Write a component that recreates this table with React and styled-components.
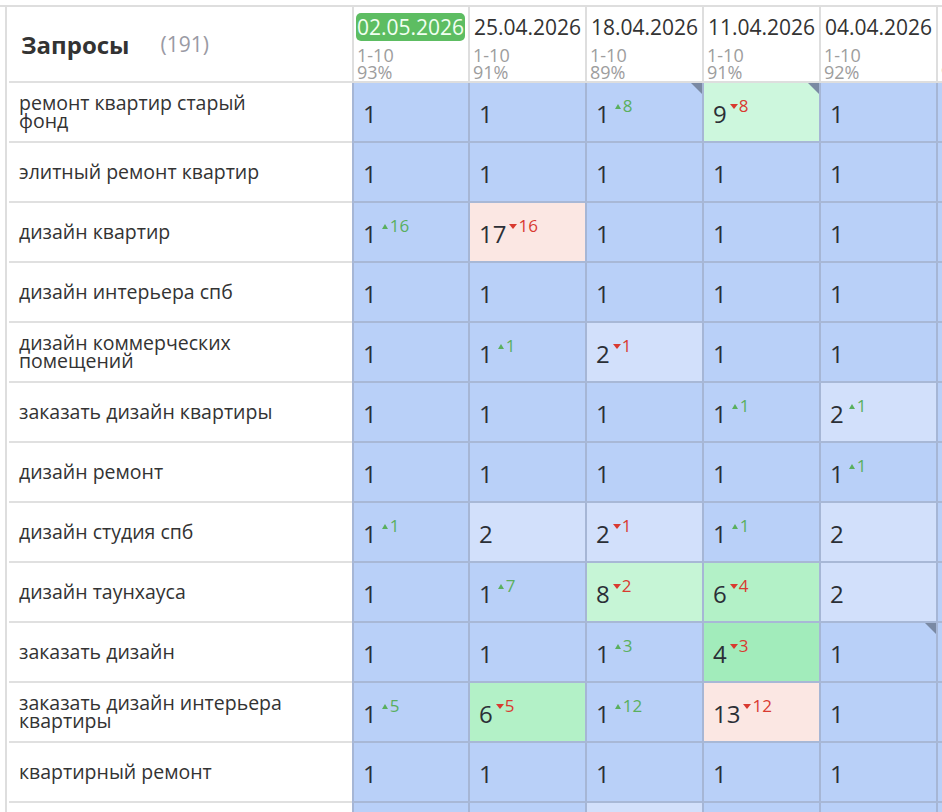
import React from "react";
import styled, { createGlobalStyle } from "styled-components";

const Global = createGlobalStyle`
  html, body { margin: 0; padding: 0; background: #fff; overflow: hidden; }
  body { font-family: "Open Sans", "Noto Sans", sans-serif; color: #333; }
`;

const COLORS = {
  blue: "#b9d0f8",
  light: "#d2e0fb",
  mint: "#cdf7dd",
  mint2: "#c6f5d6",
  green: "#b3f1c7",
  green2: "#a2ecbb",
  pink: "#fbe7e3",
};

const Frame = styled.div`
  padding-top: 5px;
  width: 942px;
  height: 812px;
  box-sizing: border-box;
  overflow: hidden;
`;

const Scroller = styled.div`
  border-top: 2px solid #dedede;
`;

const Table = styled.div`
  margin-left: 5px;
  border-left: 2px solid #dedede;
  display: flex;
  flex-direction: column;
  width: max-content;
`;

const Row = styled.div`
  display: flex;
  height: ${(p) => (p.$head ? 76 : 60)}px;
`;

const LeftCell = styled.div`
  margin-left: 2px;
  width: 343px;
  flex-shrink: 0;
  box-sizing: border-box;
  border-bottom: 2px solid #e0e0e0;
  display: flex;
  align-items: center;
  padding-left: ${(p) => (p.$head ? 12 : 10)}px;
  background: #fff;
`;

const Title = styled.span`
  font-size: 24px;
  font-weight: 700;
  color: #333;
`;

const Count = styled.span`
  margin-left: 31px;
  font-size: 21px;
  color: #9a9aa4;
`;

const Query = styled.span`
  display: block;
  max-width: 272px;
  font-size: 19.5px;
  line-height: 18px;
  color: #333;
`;

const HeadCell = styled.div`
  width: ${(p) => p.$w}px;
  flex-shrink: 0;
  box-sizing: border-box;
  border-left: 2px solid #dedede;
  border-bottom: 2px solid #dedede;
  padding: 6px 0 0 3px;
  display: flex;
  flex-direction: column;
  white-space: nowrap;
  overflow: hidden;
  background: #fff;
`;

const DateLabel = styled.span`
  align-self: flex-start;
  font-size: 21px;
  line-height: 28px;
  height: 28px;
  color: ${(p) => (p.$active ? "#f1fff1" : "#333")};
  background: ${(p) => (p.$active ? "#5dbd62" : "transparent")};
  border-radius: 5px;
  padding: 0 1px;
  margin-left: ${(p) => (p.$active ? -1 : 0)}px;
  margin-bottom: 6px;
`;

const Stat = styled.span`
  font-size: 18px;
  line-height: 17px;
  height: 17px;
  color: #9d9d9d;
`;

const DataCell = styled.div`
  position: relative;
  width: ${(p) => p.$w}px;
  flex-shrink: 0;
  box-sizing: border-box;
  border-left: 2px solid #a6b6d5;
  border-bottom: 2px solid #a8b8d6;
  background: ${(p) => COLORS[p.$tone]};
  display: flex;
  align-items: center;
  padding-left: 9px;
`;

const Corner = styled.span`
  position: absolute;
  top: 0;
  right: 0;
  width: 0;
  height: 0;
  border-top: 11px solid #7a89a3;
  border-left: 11px solid transparent;
`;

const Value = styled.span`
  display: inline-flex;
  align-items: flex-start;
  margin-top: 4px;
`;

const Num = styled.span`
  font-size: 24px;
  line-height: 24px;
  color: #2b2f36;
`;

const Delta = styled.span`
  display: inline-flex;
  align-items: center;
  margin-left: ${(p) => (p.$up ? 5 : 3)}px;
  margin-top: -5px;
  font-size: 17px;
  line-height: 17px;
  color: ${(p) => (p.$up ? "#5aaf5e" : "#d93a30")};
`;

const Arrow = styled.span`
  width: 0;
  height: 0;
  margin-right: ${(p) => (p.$up ? 2 : 1)}px;
  margin-top: 1px;
  border-left: ${(p) => (p.$up ? 3 : 4.5)}px solid transparent;
  border-right: ${(p) => (p.$up ? 3 : 4.5)}px solid transparent;
  ${(p) =>
    p.$up
      ? "border-bottom: 5px solid #5aaf5e;"
      : "border-top: 5px solid #d93a30;"}
`;

const widths = [116, 117, 117, 117, 117, 117];

const dates = [
  ["02.05.2026", "93%"],
  ["25.04.2026", "91%"],
  ["18.04.2026", "89%"],
  ["11.04.2026", "91%"],
  ["04.04.2026", "92%"],
  ["28.03.2026", "90%"],
];

const c = (v, tone = "blue", d = null, corner = false) => ({ v, tone, d, corner });

const rows = [
  ["ремонт квартир старый фонд", [c(1), c(1), c(1, "blue", 8, true), c(9, "mint", -8, true), c(1), c(1)]],
  ["элитный ремонт квартир", [c(1), c(1), c(1), c(1), c(1), c(1)]],
  ["дизайн квартир", [c(1, "blue", 16), c(17, "pink", -16), c(1), c(1), c(1), c(1)]],
  ["дизайн интерьера спб", [c(1), c(1), c(1), c(1), c(1), c(1)]],
  ["дизайн коммерческих помещений", [c(1), c(1, "blue", 1), c(2, "light", -1), c(1), c(1), c(1)]],
  ["заказать дизайн квартиры", [c(1), c(1), c(1), c(1, "blue", 1), c(2, "light", 1), c(1)]],
  ["дизайн ремонт", [c(1), c(1), c(1), c(1), c(1, "blue", 1), c(1)]],
  ["дизайн студия спб", [c(1, "blue", 1), c(2, "light"), c(2, "light", -1), c(1, "blue", 1), c(2, "light"), c(1)]],
  ["дизайн таунхауса", [c(1), c(1, "blue", 7), c(8, "mint2", -2), c(6, "green", -4), c(2, "light"), c(1)]],
  ["заказать дизайн", [c(1), c(1), c(1, "blue", 3), c(4, "green2", -3), c(1, "blue", null, true), c(1)]],
  ["заказать дизайн интерьера квартиры", [c(1, "blue", 5), c(6, "green", -5), c(1, "blue", 12), c(13, "pink", -12), c(1), c(1)]],
  ["квартирный ремонт", [c(1), c(1), c(1), c(1), c(1), c(1)]],
  ["ремонт квартир", [c(1), c(1), c(2, "light"), c(1), c(1), c(1)]],
];

function Cell({ cell, w }) {
  const up = cell.d > 0;
  return (
    <DataCell $tone={cell.tone} $w={w}>
      <Value>
        <Num>{cell.v}</Num>
        {cell.d !== null && (
          <Delta $up={up}>
            <Arrow $up={up} />
            {Math.abs(cell.d)}
          </Delta>
        )}
      </Value>
      {cell.corner && <Corner />}
    </DataCell>
  );
}

export default function App() {
  return (
    <>
      <Global />
      <Frame>
        <Scroller>
          <Table>
            <Row $head>
              <LeftCell $head>
                <Title>Запросы</Title>
                <Count>(191)</Count>
              </LeftCell>
              {dates.map(([d, p], i) => (
                <HeadCell key={d} $w={widths[i]}>
                  <DateLabel $active={i === 0}>{d}</DateLabel>
                  <Stat>1-10</Stat>
                  <Stat>{p}</Stat>
                </HeadCell>
              ))}
            </Row>
            {rows.map(([q, cells]) => (
              <Row key={q}>
                <LeftCell>
                  <Query>{q}</Query>
                </LeftCell>
                {cells.map((cell, i) => (
                  <Cell key={i} cell={cell} w={widths[i]} />
                ))}
              </Row>
            ))}
          </Table>
        </Scroller>
      </Frame>
    </>
  );
}
